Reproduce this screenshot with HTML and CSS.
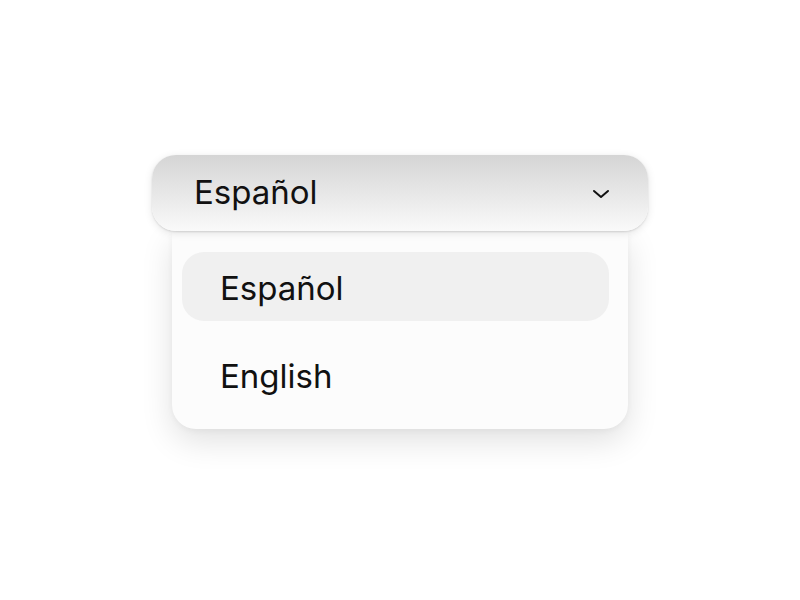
FILE: index.html
```html
<!DOCTYPE html>
<html lang="es">
<head>
<meta charset="utf-8">
<title>Idioma</title>
<link rel="stylesheet" href="styles.css">
</head>
<body>
<div class="select">
  <button class="trigger" type="button">
    <span class="trigger-label">Español</span>
    <svg class="chevron" width="18" height="10" viewBox="0 0 18 10" aria-hidden="true"><path d="M2 2 L9 8 L16 2" fill="none" stroke="#111" stroke-width="2" stroke-linecap="round" stroke-linejoin="round"/></svg>
  </button>
  <ul class="menu">
    <li class="option option-active">Español</li>
    <li class="option">English</li>
  </ul>
</div>
</body>
</html>
```
FILE: styles.css
```css
html, body {
  margin: 0;
  padding: 0;
  background: #ffffff;
  font-family: Inter, "Noto Sans", sans-serif;
}
body {
  box-sizing: border-box;
  min-height: 100vh;
  display: flex;
  justify-content: center;
  align-items: flex-start;
  padding-top: 155px;
}
.select {
  width: 496px;
  display: flex;
  flex-direction: column;
  align-items: center;
}
.trigger {
  position: relative;
  z-index: 2;
  box-sizing: border-box;
  width: 496px;
  height: 76px;
  border: none;
  border-radius: 24px;
  background: linear-gradient(180deg, #d5d5d5 0%, #e9e9e9 55%, #fafafa 100%);
  box-shadow: 0 1px 2px rgba(0,0,0,0.12), 0 2px 8px rgba(0,0,0,0.10);
  display: flex;
  align-items: center;
  justify-content: space-between;
  padding: 0 38px 0 42px;
  font-family: inherit;
  font-size: 33px;
  color: #111;
  cursor: pointer;
}
.trigger-label {
  margin-top: -3px;
}
.chevron {
  display: block;
  margin-top: 2px;
}
.menu {
  list-style: none;
  margin: 0;
  box-sizing: border-box;
  width: 456px;
  padding: 21px 19px 20px 10px;
  background: #fcfcfc;
  border-radius: 0 0 24px 24px;
  box-shadow: 0 12px 32px rgba(0,0,0,0.12), 0 2px 6px rgba(0,0,0,0.04);
  display: flex;
  flex-direction: column;
  gap: 19px;
}
.option {
  height: 69px;
  border-radius: 22px;
  display: flex;
  align-items: center;
  padding-left: 38px;
  padding-top: 3px;
  box-sizing: border-box;
  font-size: 33px;
  color: #111;
}
.option-active {
  background: #f0f0f0;
}
```
